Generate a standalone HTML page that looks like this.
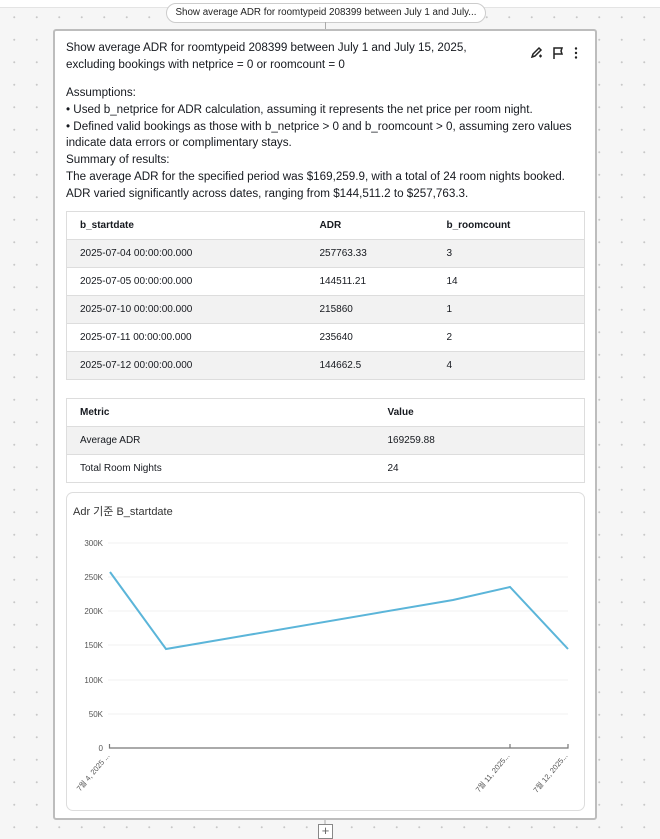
<!DOCTYPE html>
<html><head><meta charset="utf-8"><style>
*{margin:0;padding:0;box-sizing:border-box}
body{width:660px;height:839px;overflow:hidden;background-color:#f6f6f6;background-image:radial-gradient(circle,#c8c8c8 0.8px,transparent 1.2px);background-size:22.5px 22.5px;background-position:3px 6px;font-family:"Liberation Sans","Noto Sans CJK KR",sans-serif;color:#16191f;position:relative}
.top{position:absolute;left:0;top:0;width:660px;height:8px;background:#fff;border-bottom:1px solid #e4e4e4}
.pill{position:absolute;left:166px;top:3px;width:320px;height:20px;background:#fff;border:1px solid #ccc;border-radius:10px;font-size:9.8px;text-align:center;line-height:18px;color:#222;white-space:nowrap;overflow:hidden;padding:0 8px;text-overflow:ellipsis}
.vl{position:absolute;left:325px;top:22px;width:1px;height:8px;background:#aaa}
.card{position:absolute;left:53px;top:29px;width:544px;height:791px;background:#fff;border:2px solid #bdbdbd;border-radius:3px}
.txt{position:absolute;left:11px;font-size:11.65px;line-height:16.5px;white-space:nowrap}
table{position:absolute;left:11px;width:519px;border-collapse:collapse;font-size:10px;border:1px solid #ddd}
td{height:28px;padding-left:13px;border-bottom:1px solid #ddd}
tr.g td{background:#f2f2f2}
th{height:28px;text-align:left;padding-left:13px;font-weight:bold;border-bottom:1px solid #ddd}
.chart{position:absolute;left:11px;top:461px;width:519px;height:319px;border:1px solid #ddd;border-radius:7px}
.plus{position:absolute;left:318px;top:824px;width:15px;height:15px;border:1px solid #888;background:#fff;font-size:13px;line-height:12px;text-align:center;color:#666}
</style></head><body>
<div class="top"></div>
<div class="pill">Show average ADR for roomtypeid 208399 between July 1 and July...</div>
<div class="vl"></div>
<div class="card">
<div class="txt" style="top:9px">Show average ADR for roomtypeid 208399 between July 1 and July 15, 2025,<br>excluding bookings with netprice = 0 or roomcount = 0</div>
<svg style="position:absolute;left:474px;top:14px" width="60" height="16" viewBox="0 0 60 16">
<path d="M3 12l1-3 6-6 2 2-6 6z M3 12l3-1" fill="none" stroke="#222" stroke-width="1.5"/><path d="M10 11h3M11.5 9.5v3" stroke="#222" stroke-width="1.2"/>
<path d="M25 14V3h8l-1 3 1 3h-8" fill="none" stroke="#222" stroke-width="1.5"/>
<circle cx="47" cy="3.5" r="1.2" fill="#222"/><circle cx="47" cy="8" r="1.2" fill="#222"/><circle cx="47" cy="12.5" r="1.2" fill="#222"/>
</svg>
<div class="txt" style="top:54px;line-height:16.8px">Assumptions:<br>• Used b_netprice for ADR calculation, assuming it represents the net price per room night.<br>• Defined valid bookings as those with b_netprice &gt; 0 and b_roomcount &gt; 0, assuming zero values<br>indicate data errors or complimentary stays.<br>Summary of results:<br>The average ADR for the specified period was $169,259.9, with a total of 24 room nights booked.<br>ADR varied significantly across dates, ranging from $144,511.2 to $257,763.3.</div>
<table style="top:180px">
<tr><th style="width:240px">b_startdate</th><th style="width:127px">ADR</th><th>b_roomcount</th></tr>
<tr class="g"><td>2025-07-04 00:00:00.000</td><td>257763.33</td><td>3</td></tr>
<tr><td>2025-07-05 00:00:00.000</td><td>144511.21</td><td>14</td></tr>
<tr class="g"><td>2025-07-10 00:00:00.000</td><td>215860</td><td>1</td></tr>
<tr><td>2025-07-11 00:00:00.000</td><td>235640</td><td>2</td></tr>
<tr class="g"><td>2025-07-12 00:00:00.000</td><td>144662.5</td><td>4</td></tr>
</table>
<table style="top:367px">
<tr><th style="width:308px">Metric</th><th>Value</th></tr>
<tr class="g"><td>Average ADR</td><td>169259.88</td></tr>
<tr><td>Total Room Nights</td><td>24</td></tr>
</table>
<div class="chart"></div>
</div>
<svg style="position:absolute;left:0;top:0" width="660" height="839">
<text x="73" y="515" font-size="11" fill="#333" font-family="Liberation Sans,Noto Sans CJK KR,sans-serif">Adr 기준 B_startdate</text>
<g stroke="#f0f0f0" stroke-width="1">
<line x1="108" y1="543" x2="568" y2="543"/><line x1="108" y1="577" x2="568" y2="577"/><line x1="108" y1="611" x2="568" y2="611"/><line x1="108" y1="645" x2="568" y2="645"/><line x1="108" y1="680" x2="568" y2="680"/><line x1="108" y1="714" x2="568" y2="714"/></g>
<g font-size="8" fill="#555" text-anchor="end" font-family="Liberation Sans,sans-serif">
<text x="103" y="546">300K</text><text x="103" y="580">250K</text><text x="103" y="614">200K</text><text x="103" y="648">150K</text><text x="103" y="683">100K</text><text x="103" y="717">50K</text><text x="103" y="751">0</text></g>
<path d="M109.5 744V748H568V744M510 744v4" fill="none" stroke="#777" stroke-width="1.2"/>
<polyline points="110,572 166,649 453,600 510,587 568,649" fill="none" stroke="#5bb5d9" stroke-width="2"/>
<g font-size="7.5" fill="#555" font-family="Liberation Sans,Noto Sans CJK KR,sans-serif" text-anchor="end">
<text transform="translate(110,756) rotate(-50)">7월 4, 2025 ...</text>
<text transform="translate(510,756) rotate(-50)">7월 11, 2025...</text>
<text transform="translate(568,756) rotate(-50)">7월 12, 2025...</text></g>
<line x1="325" y1="820" x2="325" y2="824" stroke="#aaa"/>
</svg>
<div class="plus">+</div>
</body></html>
